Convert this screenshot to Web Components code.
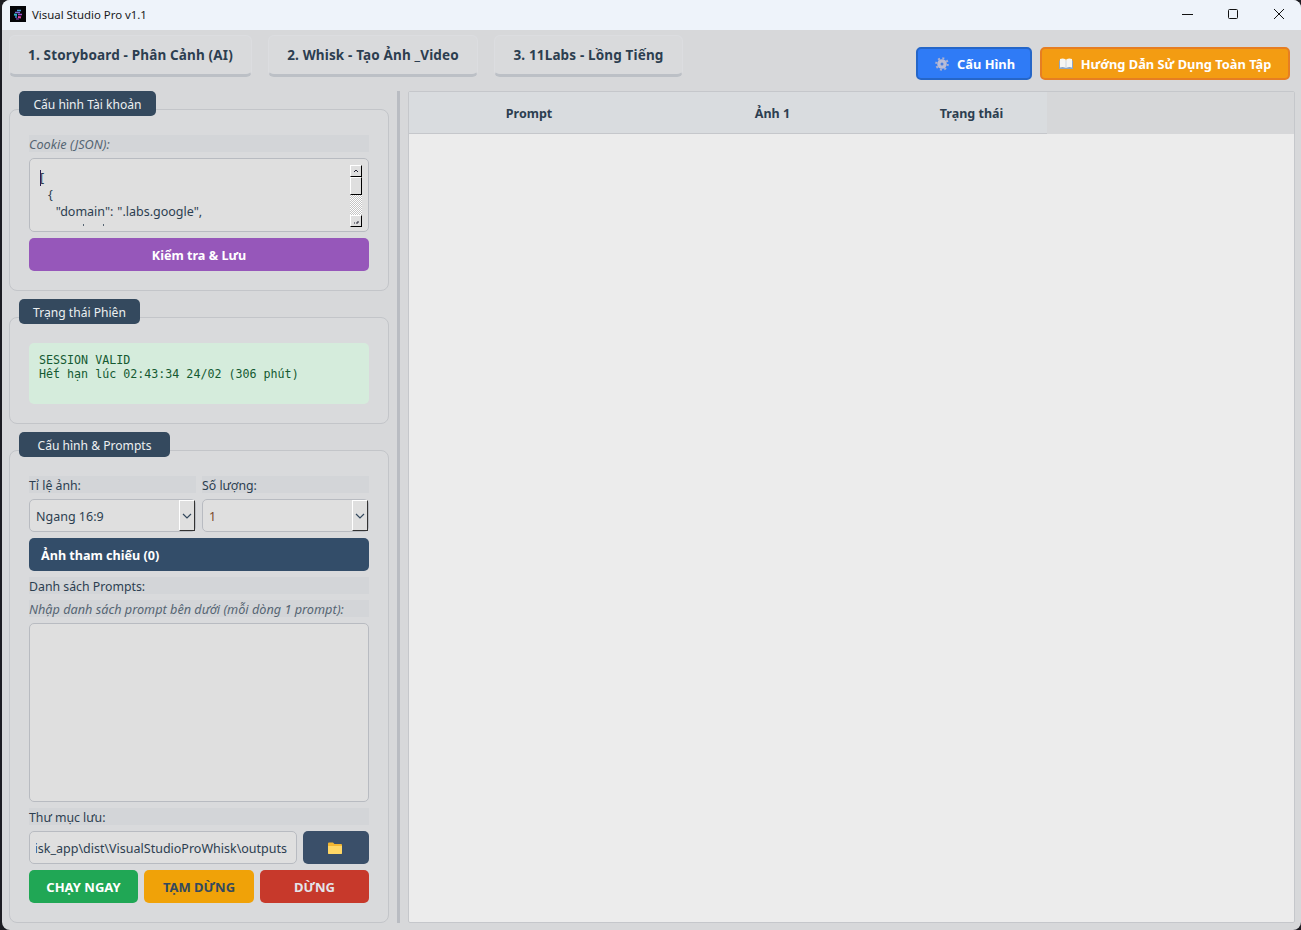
<!DOCTYPE html>
<html lang="vi">
<head>
<meta charset="utf-8">
<title>Visual Studio Pro v1.1</title>
<style>
  html,body{margin:0;height:100%;background:#1c1c22;overflow:hidden;}
  body{font-family:"Noto Sans","Open Sans","Liberation Sans",sans-serif;font-size:12.5px;color:#2c3e50;}
</style>
</head>
<body>

<vs-window>
  <vs-titlebar slot="title" text="Visual Studio Pro v1.1"></vs-titlebar>

  <vs-topbar slot="top">
    <vs-tab slot="tabs" style="width:243px">1. Storyboard - Phân Cảnh (AI)</vs-tab>
    <vs-tab slot="tabs" style="width:210px">2. Whisk - Tạo Ảnh _Video</vs-tab>
    <vs-tab slot="tabs" style="width:189px">3. 11Labs - Lồng Tiếng</vs-tab>
    <vs-action slot="actions" kind="blue" icon="gear" style="width:116px">Cấu Hình</vs-action>
    <vs-action slot="actions" kind="orange" icon="book" style="width:250px">Hướng Dẫn Sử Dụng Toàn Tập</vs-action>
  </vs-topbar>

  <vs-group slot="left" title="Cấu hình Tài khoản" title-width="137">
    <vs-label italic>Cookie (JSON):</vs-label>
    <vs-cookie-box></vs-cookie-box>
    <vs-button color="#9657ba" center>Kiểm tra &amp; Lưu</vs-button>
  </vs-group>

  <vs-group slot="left" title="Trạng thái Phiên" title-width="121">
    <vs-status line1="SESSION VALID" line2="Hết hạn lúc 02:43:34 24/02 (306 phút)"></vs-status>
  </vs-group>

  <vs-group slot="left" title="Cấu hình &amp; Prompts" title-width="151" grow>
    <vs-row>
      <vs-field label="Tỉ lệ ảnh:" value="Ngang 16:9"></vs-field>
      <vs-field label="Số lượng:" value="1" accent></vs-field>
    </vs-row>
    <vs-button color="#334d69">Ảnh tham chiếu (0)</vs-button>
    <vs-label>Danh sách Prompts:</vs-label>
    <vs-label italic>Nhập danh sách prompt bên dưới (mỗi dòng 1 prompt):</vs-label>
    <vs-prompt-box></vs-prompt-box>
    <vs-label>Thư mục lưu:</vs-label>
    <vs-folder-row value="Whisk_app\dist\VisualStudioProWhisk\outputs"></vs-folder-row>
    <vs-run-row></vs-run-row>
  </vs-group>

  <vs-table slot="right"></vs-table>
</vs-window>

<script>
// small helper, every element just sets its shadow html once
function shadow(el, html){
  el.attachShadow({mode:'open'}).innerHTML = html;
}

class VsWindow extends HTMLElement{
  constructor(){
    super();
    shadow(this, `
      <style>
        :host{display:flex;flex-direction:column;width:1299px;height:930px;margin-left:2px;
          background:#d7d8da;border-radius:8px;overflow:hidden;box-sizing:border-box;}
        .main{flex:1;min-height:0;display:flex;padding:0 6px 7px 7px;}
        .left{width:380px;flex:none;display:flex;flex-direction:column;gap:8px;}
        .split{width:3px;flex:none;margin:0 8px 0 8px;background:#b9bcc2;}
        .right{flex:1;min-width:0;display:flex;}
      </style>
      <slot name="title"></slot>
      <slot name="top"></slot>
      <div class="main">
        <div class="left"><slot name="left"></slot></div>
        <div class="split"></div>
        <div class="right"><slot name="right"></slot></div>
      </div>`);
  }
}

class VsTitlebar extends HTMLElement{
  constructor(){
    super();
    shadow(this, `
      <style>
        :host{display:flex;align-items:center;box-sizing:border-box;height:30px;flex:none;background:#eef3fa;color:#1a1a1a;
          font-size:11.4px;padding:0 0 2px 8px;}
        .logo{width:16px;height:16px;margin-right:6px;display:block;}
        .text{flex:1;}
        .ctl{box-sizing:border-box;width:46px;height:28px;padding-left:2px;display:flex;align-items:center;justify-content:center;}
        svg{display:block;}
      </style>
      <svg class="logo" viewBox="0 0 16 16">
        <rect width="16" height="16" fill="#050508"/>
        <path d="M7 4.500h4" stroke="#4aa3d8" stroke-width="1.600"/>
        <path d="M5 6.500h5" stroke="#7a6ad8" stroke-width="1.600"/>
        <path d="M4 8.500l3 .5" stroke="#2fb8c8" stroke-width="1.800"/>
        <path d="M8 8.500h4" stroke="#a34fd0" stroke-width="1.600"/>
        <path d="M5 11h2" stroke="#4a7fe0" stroke-width="1.600"/>
        <path d="M8 11l3 .5" stroke="#e0489c" stroke-width="2.200"/>
        <path d="M6 13h3" stroke="#8a4fc8" stroke-width="1.200"/>
      </svg>
      <span class="text"></span>
      <div class="ctl"><svg width="12" height="12" viewBox="0 0 12 12"><path d="M1 6.500h11" stroke="#111" stroke-width="1"/></svg></div>
      <div class="ctl"><svg width="12" height="12" viewBox="0 0 12 12"><rect x="1.500" y="1.500" width="9" height="9" rx="1" fill="none" stroke="#111"/></svg></div>
      <div class="ctl"><svg width="12" height="12" viewBox="0 0 12 12"><path d="M1 1l10 10M11 1L1 11" stroke="#111" stroke-width="1"/></svg></div>`);
    this.shadowRoot.querySelector('.text').textContent = this.getAttribute('text');
  }
}

class VsTopbar extends HTMLElement{
  constructor(){
    super();
    shadow(this, `
      <style>
        :host{display:flex;justify-content:space-between;height:61px;flex:none;box-sizing:border-box;
          padding:5px 11px 0 7px;}
        .tabs{display:flex;gap:16px;height:42px;}
        .actions{display:flex;gap:8px;margin-top:12px;height:33px;}
      </style>
      <div class="tabs"><slot name="tabs"></slot></div>
      <div class="actions"><slot name="actions"></slot></div>`);
  }
}

class VsTab extends HTMLElement{
  constructor(){
    super();
    shadow(this, `
      <style>
        :host{display:flex;align-items:center;justify-content:center;box-sizing:border-box;height:42px;
          background:#d9dadc;border:1px solid #dcdde0;border-bottom:3px solid #bcc0c6;border-radius:6px;
          font-weight:700;font-size:13.5px;letter-spacing:.15px;color:#2c3e50;}
      </style><slot></slot>`);
  }
}

class VsAction extends HTMLElement{
  constructor(){
    super();
    var icon = this.getAttribute('icon');
    var svg = icon == 'gear'
      ? `<svg width="14" height="14" viewBox="0 0 14 14"><circle cx="7" cy="7" r="4.800" fill="#b9bcd6"/><circle cx="7" cy="7" r="5.800" fill="none" stroke="#aeb1ce" stroke-width="2" stroke-dasharray="2 2.500"/><circle cx="7" cy="7" r="1.500" fill="#4a7fe0"/></svg>`
      : `<svg width="14" height="11" viewBox="0 0 14 11"><path d="M0 2.500h14V11H0z" fill="#8ea6c4"/><path d="M1 1q3-1.200 5.800.5V10Q4 8.500 1 9.500zM13 1q-3-1.200-5.800.5V10q2.800-1.500 5.800-.5z" fill="#f6f6f3"/></svg>`;
    shadow(this, `
      <style>
        :host{display:flex;align-items:center;justify-content:center;gap:8px;box-sizing:border-box;height:33px;
          border-radius:5px;color:#fff;font-weight:700;font-size:12.85px;}
        :host([kind=blue]){background:#2f7bf6;border:2px solid #2566c8;padding-left:2px;}
        :host([kind=orange]){background:#f39c12;border:2px solid #e67e22;}
        svg{display:block;}
      </style>${svg}<span><slot></slot></span>`);
  }
}

class VsGroup extends HTMLElement{
  constructor(){
    super();
    shadow(this, `
      <style>
        :host{display:flex;flex-direction:column;}
        :host([grow]){flex:1;min-height:0;}
        .title{box-sizing:border-box;height:25px;margin-left:10px;padding-top:1px;background:#34495e;color:#ecf0f1;
          border-radius:5px;display:flex;align-items:center;justify-content:center;font-size:12.1px;
          position:relative;z-index:1;flex:none;}
        .box{flex:1;margin-top:-7px;border:1px solid #c3c5c9;border-radius:8px;background:#d9dadc;
          padding:25px 19px 19px;display:flex;flex-direction:column;gap:6px;min-height:0;}
      </style>
      <div class="title"></div>
      <div class="box"><slot></slot></div>`);
    var t = this.shadowRoot.querySelector('.title');
    t.textContent = this.getAttribute('title');
    t.style.width = this.getAttribute('title-width') + 'px';
    this.removeAttribute('title');
  }
}

class VsLabel extends HTMLElement{
  constructor(){
    super();
    shadow(this, `
      <style>
        :host{display:flex;align-items:center;box-sizing:border-box;height:17px;padding-top:1px;background:#d3d5d8;color:#2c3e50;font-size:12.3px;flex:none;white-space:nowrap;}
        :host([italic]){font-style:italic;font-size:12.7px;color:#566573;}
      </style><slot></slot>`);
  }
}

class VsCookieBox extends HTMLElement{
  constructor(){
    super();
    shadow(this, `
      <style>
        :host{display:block;position:relative;height:74px;box-sizing:border-box;border:1px solid #b8bbc1;border-radius:5px;background:#dfdfdf;overflow:hidden;flex:none;}
        pre{margin:0;padding:10px 0 0 10px;font:12.5px/17px "Noto Sans","Open Sans",sans-serif;word-spacing:.7px;color:#2c3e50;}
        .caret{position:absolute;left:10px;top:11px;width:1px;height:16px;background:#2b1f55;}
        /* tops of the next line, that is all the text box lets through */
        .tip{position:absolute;top:65px;width:1px;height:2px;background:#566573;}
        vs-scroll{position:absolute;right:6px;top:6px;}
      </style>
      <pre>[
  {
    "domain": ".labs.google",</pre>
      <div class="caret"></div>
      <div class="tip" style="left:53px"></div>
      <div class="tip" style="left:73px"></div>
      <vs-scroll></vs-scroll>`);
  }
}

// old windows style scrollbar that Qt draws in the text box
class VsScroll extends HTMLElement{
  constructor(){
    super();
    var arrow = function(d){
      return `<svg width="10" height="10" viewBox="0 0 10 10"><path d="${d}" fill="none" stroke="#223" stroke-width="1"/></svg>`;
    };
    shadow(this, `
      <style>
        :host{display:flex;flex-direction:column;width:12px;height:62px;}
        .b{box-sizing:border-box;background:#dfdfdf;border:1px solid #fff;border-right:1px solid #000;border-bottom:1px solid #000;}
        .btn{height:12px;display:flex;align-items:center;justify-content:center;}
        .thumb{height:18px;}
        .track{flex:1;background:repeating-conic-gradient(#fff 0 25%,#c4c4c4 0 50%) 0 0/2px 2px;}
        svg{display:block;}
      </style>
      <div class="b btn">${arrow('M3 6l2-2 2 2')}</div>
      <div class="b thumb"></div>
      <div class="track"></div>
      <div class="b btn">${arrow('M3 7h1M5 7h2M7 5v2')}</div>`);
  }
}

class VsButton extends HTMLElement{
  constructor(){
    super();
    shadow(this, `
      <style>
        :host{display:flex;align-items:center;box-sizing:border-box;height:33px;border-radius:5px;color:#fff;
          font-weight:700;font-size:12.6px;padding:1px 0 0 12px;flex:none;background:var(--bg);}
        :host([center]){justify-content:center;padding-left:0;}
      </style><slot></slot>`);
    this.style.setProperty('--bg', this.getAttribute('color'));
  }
}

class VsStatus extends HTMLElement{
  constructor(){
    super();
    shadow(this, `
      <style>
        :host{display:block;box-sizing:border-box;height:61px;background:#d5ecdc;border-radius:5px;padding:10px;
          font:11.67px/14px "DejaVu Sans Mono","Liberation Mono",monospace;color:#145a32;}
        div{white-space:pre;}
      </style>
      <div class="a"></div><div class="b"></div>`);
    this.shadowRoot.querySelector('.a').textContent = this.getAttribute('line1');
    this.shadowRoot.querySelector('.b').textContent = this.getAttribute('line2');
  }
}

class VsRow extends HTMLElement{
  constructor(){
    super();
    shadow(this, `
      <style>:host{display:grid;grid-template-columns:167px 167px;gap:6px;flex:none;}</style><slot></slot>`);
  }
}

class VsField extends HTMLElement{
  constructor(){
    super();
    shadow(this, `
      <style>
        :host{display:flex;flex-direction:column;gap:6px;}
        .lab{box-sizing:border-box;height:17px;padding-top:1px;display:flex;align-items:center;background:#d3d5d8;font-size:12.3px;color:#2c3e50;}
        .sel{position:relative;box-sizing:border-box;height:33px;border:1px solid #b8bbc1;border-radius:5px;background:#dfdfdf;
          display:flex;align-items:center;padding:1px 0 0 6px;font-size:12.5px;color:#2c3e50;}
        :host([accent]) .val{color:#7c4a2a;}
        .arrow{position:absolute;right:0;top:0;bottom:0;width:16px;box-sizing:border-box;background:#dfdfdf;
          border:1px solid #fff;border-right:1px solid #333;border-bottom:1px solid #333;display:flex;align-items:center;justify-content:center;}
        svg{display:block;}
      </style>
      <div class="lab"></div>
      <div class="sel"><span class="val"></span>
        <div class="arrow"><svg width="10" height="10" viewBox="0 0 10 10"><path d="M1 3l4 4 4-4" fill="none" stroke="#34495e" stroke-width="1.200"/></svg></div>
      </div>`);
    this.shadowRoot.querySelector('.lab').textContent = this.getAttribute('label');
    this.shadowRoot.querySelector('.val').textContent = this.getAttribute('value');
  }
}

class VsPromptBox extends HTMLElement{
  constructor(){
    super();
    shadow(this, `<style>:host{display:block;flex:1;min-height:0;box-sizing:border-box;border:1px solid #b8bbc1;border-radius:5px;background:#dfdfdf;}</style>`);
  }
}

class VsFolderRow extends HTMLElement{
  constructor(){
    super();
    shadow(this, `
      <style>
        :host{display:flex;gap:6px;height:33px;flex:none;}
        .input{box-sizing:border-box;width:268px;border:1px solid #b8bbc1;border-radius:5px;background:#dfdfdf;
          display:flex;padding:1px 9px 0 6px;font-size:12.5px;color:#2c3e50;white-space:nowrap;}
        .clip{flex:1;min-width:0;overflow:hidden;display:flex;align-items:center;justify-content:flex-end;}
        span{flex:none;}
        .btn{flex:1;background:#3a4f69;border-radius:5px;padding-right:2px;display:flex;align-items:center;justify-content:center;}
        svg{display:block;}
      </style>
      <div class="input"><div class="clip"><span></span></div></div>
      <div class="btn"><svg width="14" height="12" viewBox="0 0 14 12"><path d="M0 1.500a1 1 0 0 1 1-1h4l1.500 1.500H13a1 1 0 0 1 1 1V11a1 1 0 0 1-1 1H1a1 1 0 0 1-1-1z" fill="#f2b632"/><path d="M0 4h14v7a1 1 0 0 1-1 1H1a1 1 0 0 1-1-1z" fill="#ffd766"/></svg></div>`);
    this.shadowRoot.querySelector('span').textContent = this.getAttribute('value');
  }
}

class VsRunRow extends HTMLElement{
  constructor(){
    super();
    shadow(this, `
      <style>
        :host{display:grid;grid-template-columns:109px 110px 109px;gap:6px;height:33px;flex:none;}
        div{border-radius:5px;display:flex;align-items:center;justify-content:center;font-weight:700;font-size:13px;}
        .go{background:#20a755;color:#fff;}
        .pause{background:#f0a208;color:#34495e;}
        .stop{background:#c7392b;color:#e4e4ea;}
      </style>
      <div class="go">CHẠY NGAY</div><div class="pause">TẠM DỪNG</div><div class="stop">DỪNG</div>`);
  }
}

class VsTable extends HTMLElement{
  constructor(){
    super();
    shadow(this, `
      <style>
        :host{flex:1;display:flex;flex-direction:column;box-sizing:border-box;border:1px solid #c5c7cb;background:#ececec;border-radius:2px;}
        .head{display:grid;grid-template-columns:240px 247px 151px 1fr;height:42px;background:#d6d7d9;flex:none;}
        .c{display:flex;align-items:center;justify-content:center;box-sizing:border-box;padding-top:2px;background:#d9dcdf;font-weight:700;font-size:12.5px;color:#2c3e50;border-bottom:1px solid #c5c7cb;}
      </style>
      <div class="head"><div class="c">Prompt</div><div class="c">Ảnh 1</div><div class="c">Trạng thái</div><div></div></div>`);
  }
}

customElements.define('vs-window', VsWindow);
customElements.define('vs-titlebar', VsTitlebar);
customElements.define('vs-topbar', VsTopbar);
customElements.define('vs-tab', VsTab);
customElements.define('vs-action', VsAction);
customElements.define('vs-group', VsGroup);
customElements.define('vs-label', VsLabel);
customElements.define('vs-scroll', VsScroll);
customElements.define('vs-cookie-box', VsCookieBox);
customElements.define('vs-button', VsButton);
customElements.define('vs-status', VsStatus);
customElements.define('vs-row', VsRow);
customElements.define('vs-field', VsField);
customElements.define('vs-prompt-box', VsPromptBox);
customElements.define('vs-folder-row', VsFolderRow);
customElements.define('vs-run-row', VsRunRow);
customElements.define('vs-table', VsTable);
</script>
</body>
</html>
